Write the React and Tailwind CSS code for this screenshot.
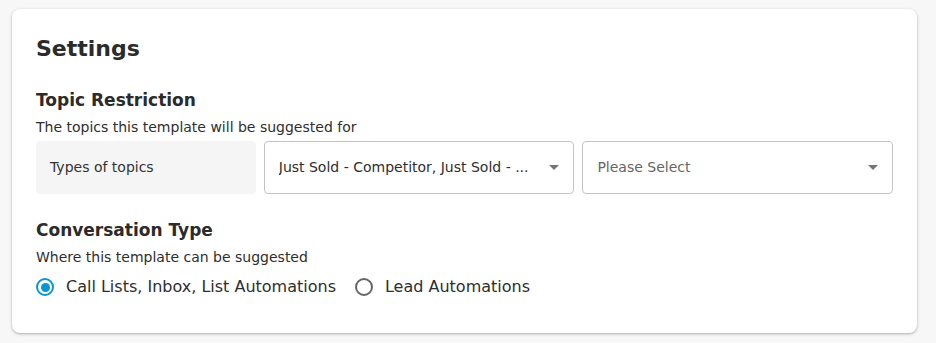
import React, { useState } from 'react'

const font = { fontFamily: '"DejaVu Sans", sans-serif' }

const Caret = () => (
  <svg width="10" height="5" viewBox="0 0 10 5" className="shrink-0">
    <path d="M0 0 L10 0 L5 5 Z" fill="#757575" />
  </svg>
)

const Radio = ({ checked, label, onClick }) => (
  <button type="button" onClick={onClick} className="flex items-center gap-[12px]">
    <span
      className={
        'flex h-[18px] w-[18px] items-center justify-center rounded-full border-2 ' +
        (checked ? 'border-[#0a95d1]' : 'border-[#666]')
      }
    >
      {checked && <span className="h-[9px] w-[9px] rounded-full bg-[#0a95d1]" />}
    </span>
    <span className="text-[16px] leading-[20px] text-[#2e2e2e]">{label}</span>
  </button>
)

export default function App() {
  const [type, setType] = useState('call')

  return (
    <div className="min-h-screen bg-[#f7f7f7] pl-[12px] pr-[19px] pt-[9px]" style={font}>
      <div className="rounded-[8px] bg-white px-[24px] pb-[36px] pt-[26px] shadow-[0_1px_3px_rgba(0,0,0,0.3)]">
        <h2 className="text-[22px] font-bold leading-[28px] text-[#2b2b2b]">Settings</h2>

        <h3 className="mt-[26px] text-[17px] font-bold leading-[22px] text-[#2b2b2b]">Topic Restriction</h3>
        <p className="mt-[6px] text-[14px] leading-[20px] text-[#2e2e2e]">
          The topics this template will be suggested for
        </p>

        <div className="mt-[4px] flex h-[53px] gap-[8px]">
          <div className="flex w-[220px] items-center rounded-[4px] bg-[#f5f5f5] px-[14px] text-[14px] text-[#333]">
            Types of topics
          </div>
          <div className="flex w-[311px] items-center justify-between rounded-[4px] border border-[#c4c4c4] pl-[14px] pr-[14px]">
            <span className="truncate text-[14px] text-[#2e2e2e]">Just Sold - Competitor, Just Sold - ...</span>
            <Caret />
          </div>
          <div className="flex w-[311px] items-center justify-between rounded-[4px] border border-[#c4c4c4] pl-[14px] pr-[14px]">
            <span className="text-[14px] text-[#666]">Please Select</span>
            <Caret />
          </div>
        </div>

        <h3 className="mt-[25px] text-[17px] font-bold leading-[22px] text-[#2b2b2b]">Conversation Type</h3>
        <p className="mt-[6px] text-[14px] leading-[20px] text-[#2e2e2e]">Where this template can be suggested</p>

        <div className="mt-[10px] flex items-center gap-[19px]">
          <Radio checked={type === 'call'} label="Call Lists, Inbox, List Automations" onClick={() => setType('call')} />
          <Radio checked={type === 'lead'} label="Lead Automations" onClick={() => setType('lead')} />
        </div>
      </div>
    </div>
  )
}
